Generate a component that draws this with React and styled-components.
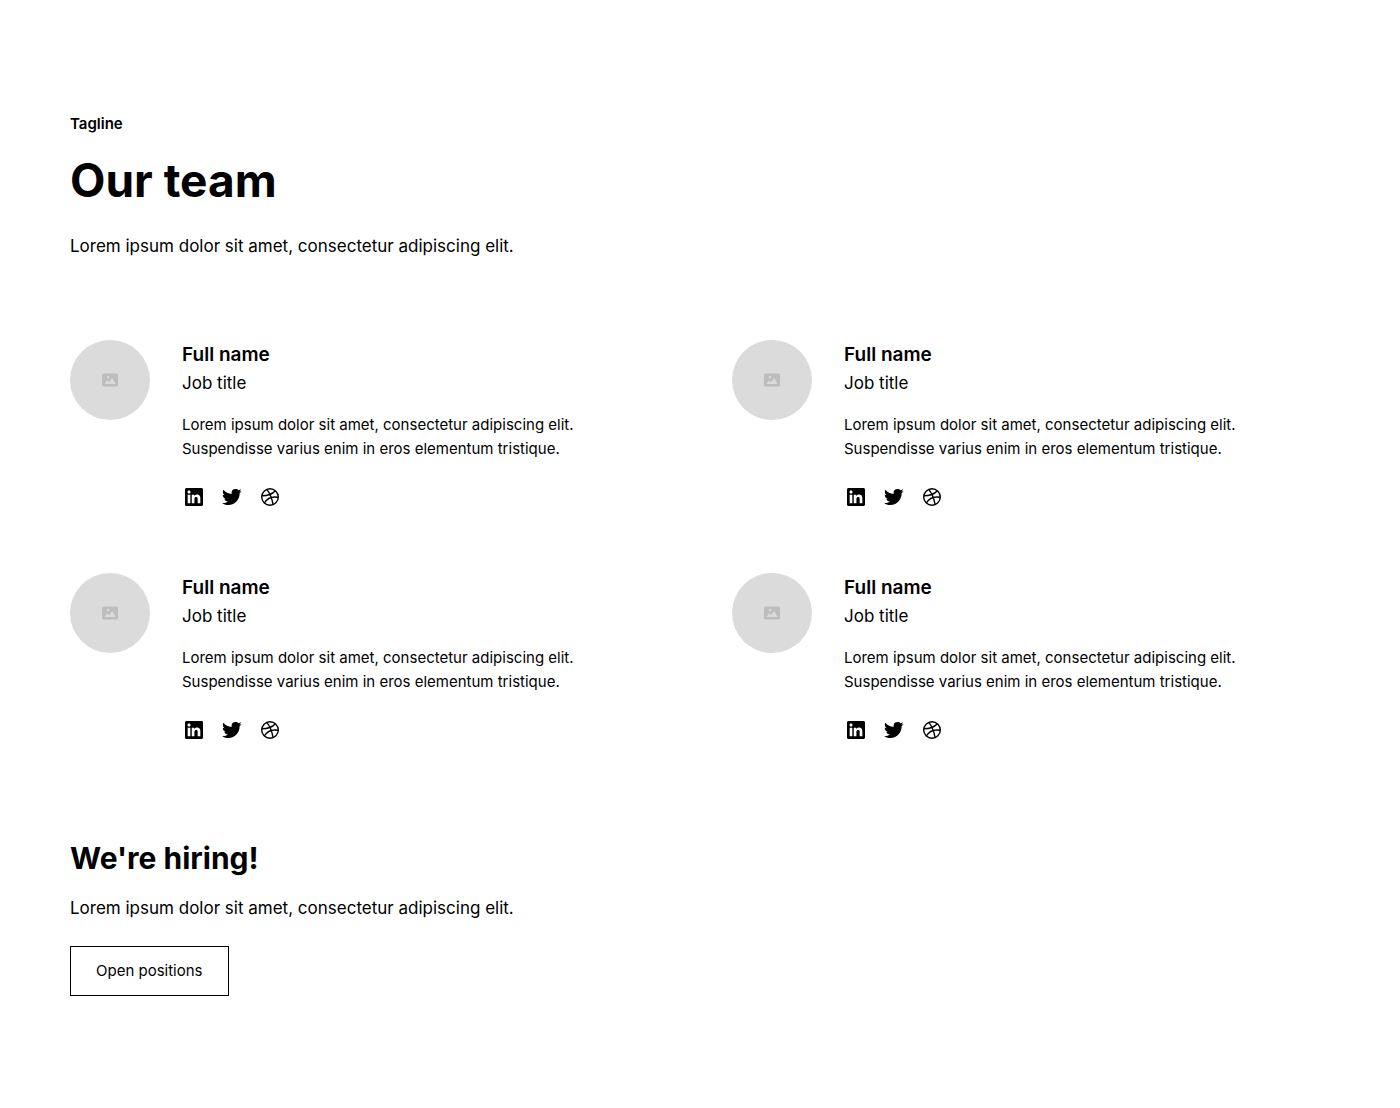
import React from 'react';
import styled, { createGlobalStyle } from 'styled-components';
import { BiLogoTwitter } from 'react-icons/bi';

const GlobalStyle = createGlobalStyle`
  *, *::before, *::after { box-sizing: border-box; }
  body {
    margin: 0;
    background: #fff;
    color: #000;
    font-family: Inter, "Liberation Sans", sans-serif;
    font-size: 15px;
    line-height: 24px;
  }
  h2, h3, h4, p, ul { margin: 0; padding: 0; }
`;

const Section = styled.section`
  padding: 112px 5%;
`;

const Header = styled.header`
  max-width: 768px;
  margin-bottom: 80px;
`;

const Tagline = styled.p`
  margin-bottom: 16px;
  font-weight: 600;
`;

const Title = styled.h2`
  margin-bottom: 24px;
  font-size: 46px;
  font-weight: 700;
  line-height: 57px;
`;

const Lead = styled.p`
  font-size: 17px;
  line-height: 27px;
`;

const TeamGrid = styled.ul`
  display: grid;
  grid-template-columns: repeat(2, minmax(0, 1fr));
  gap: 64px;
  list-style: none;

  @media (max-width: 767px) {
    grid-template-columns: minmax(0, 1fr);
  }
`;

const Member = styled.li`
  display: flex;
  align-items: flex-start;
  gap: 32px;
`;

const Avatar = styled.div`
  display: flex;
  flex: none;
  align-items: center;
  justify-content: center;
  width: 80px;
  height: 80px;
  border-radius: 50%;
  background: #dbdbdb;
`;

const Name = styled.h3`
  font-size: 19px;
  font-weight: 600;
  line-height: 30px;
`;

const Bio = styled.p`
  margin-top: 16px;
`;

const Socials = styled.div`
  display: flex;
  gap: 14px;
  margin-top: 24px;
`;

const SocialLink = styled.a`
  display: flex;
  color: inherit;
  font-size: 24px;
`;

const Hiring = styled.div`
  max-width: 448px;
  margin-top: 96px;
`;

const HiringTitle = styled.h4`
  margin-bottom: 16px;
  font-size: 30px;
  font-weight: 700;
  line-height: 41px;
`;

const Button = styled.button`
  margin-top: 24px;
  padding: 12px 25px;
  border: 1px solid #000;
  border-radius: 0;
  background: #fff;
  color: #000;
  font: inherit;
  cursor: pointer;
`;

const ImagePlaceholder = () => (
  <svg width="16" height="14" viewBox="0 0 16 14" aria-hidden="true">
    <rect y="0.5" width="16" height="13" rx="1.5" fill="#bdbdbd" />
    <circle cx="6" cy="4" r="1.25" fill="#dbdbdb" />
    <path d="M2.5 11 5.2 7.2 7 9.2 10.2 5 13.7 11Z" fill="#dbdbdb" />
  </svg>
);

const LinkedInIcon = () => (
  <svg width="24" height="24" viewBox="0 0 24 24" aria-hidden="true">
    <path
      fill="currentColor"
      fillRule="evenodd"
      d="M4.5 3C3.67 3 3 3.67 3 4.5v15c0 .83.67 1.5 1.5 1.5h15c.83 0 1.5-.67 1.5-1.5v-15c0-.83-.67-1.5-1.5-1.5h-15Zm4.02 4c.01.96-.71 1.55-1.56 1.54-.8 0-1.5-.64-1.49-1.54 0-.85.67-1.52 1.54-1.5.88.02 1.52.66 1.51 1.5Zm3.76 2.76H9.76v8.56h2.66v-4.38c0-.25.01-.5.08-.74.24-.88 1.03-1.44 1.91-1.3.56.09.94.41 1.09.95.1.33.15.69.15 1.04.01 1.42.01 2.95.01 4.43h2.67v-4.95c0-.51-.05-1.01-.18-1.51-.19-.73-.57-1.34-1.2-1.78-.45-.31-.94-.51-1.48-.53-.34-.02-.69-.06-1.02.01-.77.15-1.44.5-1.95 1.12l-.22.28V9.76Zm-6.6 8.56h2.65V9.77H5.68v8.55Z"
    />
  </svg>
);

const DribbbleIcon = () => (
  <svg
    width="24"
    height="24"
    viewBox="0 0 24 24"
    fill="none"
    stroke="currentColor"
    strokeWidth="1.4"
    aria-hidden="true"
  >
    <circle cx="12" cy="12" r="8.3" />
    <path d="M8.8 4.4c2.7 3.3 5 7.8 6.3 15.3" />
    <path d="M3.8 10.7c5.4 0 10-1 13.6-5" />
    <path d="M6.3 18c2.8-4.6 7.5-7 14-5.7" />
  </svg>
);

const socials = [
  { label: 'LinkedIn', Icon: LinkedInIcon },
  { label: 'Twitter', Icon: BiLogoTwitter },
  { label: 'Dribbble', Icon: DribbbleIcon },
];

const member = {
  name: 'Full name',
  job: 'Job title',
  bio: 'Lorem ipsum dolor sit amet, consectetur adipiscing elit. Suspendisse varius enim in eros elementum tristique.',
};

const team = [member, member, member, member];

export default function App() {
  return (
    <>
      <GlobalStyle />
      <Section>
        <Header>
          <Tagline>Tagline</Tagline>
          <Title>Our team</Title>
          <Lead>Lorem ipsum dolor sit amet, consectetur adipiscing elit.</Lead>
        </Header>
        <TeamGrid>
          {team.map(({ name, job, bio }, i) => (
            <Member key={i}>
              <Avatar>
                <ImagePlaceholder />
              </Avatar>
              <div>
                <Name>{name}</Name>
                <Lead>{job}</Lead>
                <Bio>{bio}</Bio>
                <Socials>
                  {socials.map(({ label, Icon }) => (
                    <SocialLink key={label} href="#" aria-label={label}>
                      <Icon />
                    </SocialLink>
                  ))}
                </Socials>
              </div>
            </Member>
          ))}
        </TeamGrid>
        <Hiring>
          <HiringTitle>We're hiring!</HiringTitle>
          <Lead>Lorem ipsum dolor sit amet, consectetur adipiscing elit.</Lead>
          <Button type="button">Open positions</Button>
        </Hiring>
      </Section>
    </>
  );
}
